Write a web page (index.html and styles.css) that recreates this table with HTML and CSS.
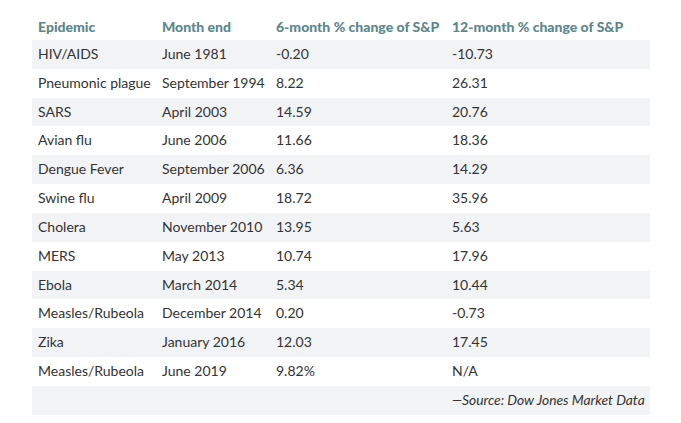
FILE: index.html
```html
<!DOCTYPE html>
<html>
<head>
<meta charset="utf-8">
<link rel="stylesheet" href="styles.css">
</head>
<body>
<div class="wrap">
<table class="data">
<colgroup>
<col class="c1"><col class="c2"><col class="c3"><col class="c4">
</colgroup>
<thead>
<tr><th>Epidemic</th><th>Month end</th><th>6-month % change of S&amp;P</th><th>12-month % change of S&amp;P</th></tr>
</thead>
<tbody>
<tr><td>HIV/AIDS</td><td>June 1981</td><td>-0.20</td><td>-10.73</td></tr>
<tr><td>Pneumonic plague</td><td>September 1994</td><td>8.22</td><td>26.31</td></tr>
<tr><td>SARS</td><td>April 2003</td><td>14.59</td><td>20.76</td></tr>
<tr><td>Avian flu</td><td>June 2006</td><td>11.66</td><td>18.36</td></tr>
<tr><td>Dengue Fever</td><td>September 2006</td><td>6.36</td><td>14.29</td></tr>
<tr><td>Swine flu</td><td>April 2009</td><td>18.72</td><td>35.96</td></tr>
<tr><td>Cholera</td><td>November 2010</td><td>13.95</td><td>5.63</td></tr>
<tr><td>MERS</td><td>May 2013</td><td>10.74</td><td>17.96</td></tr>
<tr><td>Ebola</td><td>March 2014</td><td>5.34</td><td>10.44</td></tr>
<tr><td>Measles/Rubeola</td><td>December 2014</td><td>0.20</td><td>-0.73</td></tr>
<tr><td>Zika</td><td>January 2016</td><td>12.03</td><td>17.45</td></tr>
<tr><td>Measles/Rubeola</td><td>June 2019</td><td>9.82%</td><td>N/A</td></tr>
<tr><td></td><td></td><td></td><td class="source">—Source: Dow Jones Market Data</td></tr>
</tbody>
</table>
</div>
</body>
</html>
```
FILE: styles.css
```css
html, body {
  margin: 0;
  padding: 0;
  background: #ffffff;
}
body {
  font-family: Lato, "Open Sans", sans-serif;
  font-size: 14px;
  color: #333333;
}
.wrap {
  padding: 11px 31px 0 32px;
}
.data {
  width: 618px;
  border-collapse: collapse;
  table-layout: fixed;
}
.c1 { width: 124px; }
.c2 { width: 114px; }
.c3 { width: 176px; }
.c4 { width: 204px; }
.data th,
.data td {
  padding: 7px 6px;
  line-height: 14.85px;
  text-align: left;
  white-space: nowrap;
}
.data th {
  font-weight: 900;
  color: #5b878c;
  padding-top: 9px;
  padding-bottom: 5px;
}
.data tbody tr:nth-child(odd) {
  background: #f2f3f5;
}
.data td.source {
  font-style: italic;
  font-size: 13.8px;
}
```
